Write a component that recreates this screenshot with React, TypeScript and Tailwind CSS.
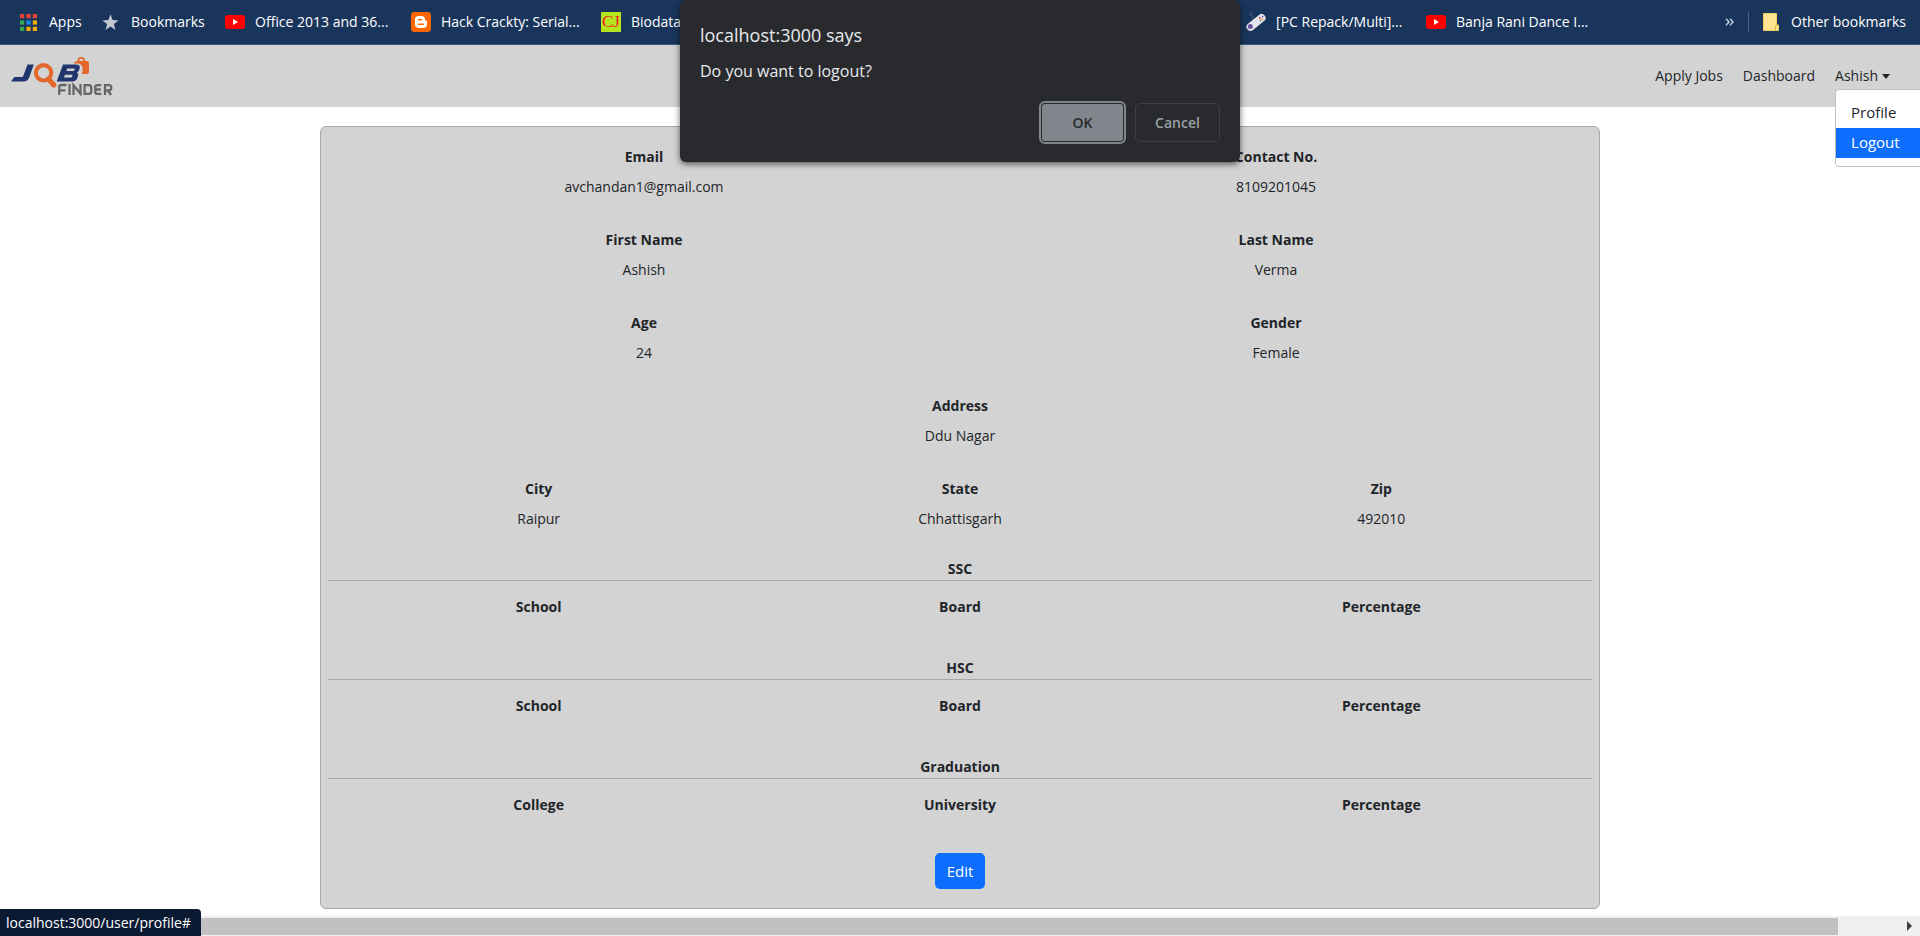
import type { ReactNode } from "react";

function YouTubeIcon() {
  return (
    <svg width="20" height="20" viewBox="0 0 20 20" aria-hidden="true">
      <rect x="0" y="3" width="20" height="14" rx="3" fill="#f00" />
      <path d="M8 7.1v5.8l5-2.9z" fill="#fff" />
    </svg>
  );
}

function AppsIcon() {
  const colors = ["#ea4335", "#ea4335", "#ea4335", "#34a853", "#1e88e5", "#fbad05", "#34a853", "#fbad05", "#fbad05"];
  return (
    <svg width="17" height="17" viewBox="0 0 17 17" aria-hidden="true">
      {colors.map((c, i) => (
        <rect key={i} x={(i % 3) * 6.4} y={Math.floor(i / 3) * 6.4} width="4.2" height="4.2" fill={c} />
      ))}
    </svg>
  );
}

function StarIcon() {
  return (
    <svg width="17" height="17" viewBox="0 0 17 17" aria-hidden="true">
      <path d="M8.5 0.6l2.1 5.5 5.9.3-4.6 3.7 1.6 5.8-5-3.3-5 3.3 1.6-5.8L.5 6.4l5.9-.3z" fill="#c3c8d0" />
    </svg>
  );
}

function BloggerIcon() {
  return (
    <svg width="20" height="20" viewBox="0 0 20 20" aria-hidden="true">
      <rect width="20" height="20" rx="3.4" fill="#f60" />
      <path d="M7.4 4h3.2c2 0 3.5 1.5 3.5 3.4 0 1 .3 1.2 1 1.2.6 0 .9.4.9.9v3c0 2-1.5 3.5-3.5 3.5h-5C5.5 16 4 14.5 4 12.5v-5C4 5.5 5.5 4 7.4 4z" fill="#fff" />
      <path d="M7.6 7.7h2.8M7.6 12.3h4.8" stroke="#f60" strokeWidth="1.6" strokeLinecap="round" />
    </svg>
  );
}

function ControllerIcon() {
  return (
    <svg width="20" height="20" viewBox="0 0 20 20" aria-hidden="true">
      <path d="M7 7C8 4 3 4 5 0" stroke="#4a5a78" strokeWidth="1.2" fill="none" />
      <path d="M4.5 14.8L15.5 6" stroke="#e6e4ec" strokeWidth="8" strokeLinecap="round" />
      <circle cx="4.3" cy="14.6" r="2.5" fill="#6a4fa3" />
      <circle cx="13.8" cy="6" r=".9" fill="#d33" />
      <circle cx="16.6" cy="4.6" r=".9" fill="#4a6fc4" />
      <circle cx="16.2" cy="7.4" r=".9" fill="#e0a030" />
      <circle cx="14.5" cy="8.6" r=".8" fill="#3a9a5a" />
    </svg>
  );
}

function FolderIcon() {
  return (
    <svg width="16" height="18" viewBox="0 0 16 18" aria-hidden="true">
      <path d="M.5.5h13V12h2v5.5H.5z" fill="#ffe591" stroke="#f2cf5c" />
      <path d="M12.5 17v-4.5H15" fill="none" stroke="#e3b93c" />
    </svg>
  );
}

function Logo() {
  return (
    <svg width="102" height="40" viewBox="0 0 102 40" role="img" aria-label="Job Finder">
      <path d="M16.5 8.5h6.3l-4.3 12.3c-1.1 3-2.9 4.7-6 4.7H0l3.4-4.6h6.9c1.2 0 1.7-.4 2.1-1.5z" fill="#21366f" />
      <circle cx="32.6" cy="16.8" r="7.7" fill="none" stroke="#e4672b" strokeWidth="4.1" />
      <path d="M37.5 23l5.3 6" stroke="#e4672b" strokeWidth="5.2" strokeLinecap="round" />
      <path d="M67.5 5.5V4c0-1.500 1-2.200 2.700-2.200s2.700.7 2.700 2.200v1.500" fill="none" stroke="#e4672b" strokeWidth="1.8" />
      <path d="M63 7.4c.5-1.600 1.500-2.400 3-2.400h9.700c1.500 0 2.300.8 2.300 2.300v8.400c0 1.500-.8 2.300-2.300 2.300h-5.200c1.200-2.200 1.300-3.800 1-6.200-.3-2.700-2-4.300-4.700-4.400z" fill="#e4672b" />
      <path fillRule="evenodd" d="M52 8.5h13.200c3 0 4.200 1.500 3.400 4l-.4 1.300c-.5 1.600-1.300 2.300-2.700 2.800 1.500.5 2 1.700 1.400 3.500l-.5 1.700c-.8 2.500-2.500 3.700-5.300 3.700H45.700zm4.300 4-1 2.600h6.700c.8 0 1.200-.3 1.400-1l.2-.5c.3-.7 0-1.100-.8-1.100zm-2.300 6.200-1 2.800h6.800c.8 0 1.200-.3 1.400-1l.2-.7c.3-.7 0-1.100-.8-1.100z" fill="#21366f" />
      <g fill="none" stroke="#666" strokeWidth="2.3">
        <path d="M48.300 39V31q0-2 2-2H55.500M48.300 34.300H54.500" />
        <path d="M58.500 28v11" />
        <path d="M62.500 39V29.300L69.500 37.700V28" />
        <path d="M73.600 29.100h4q2.700 0 2.700 2.700v3.400q0 2.700-2.700 2.700h-4z" />
        <path d="M90.300 29.100h-4.200q-1.800 0-1.800 1.800v5.200q0 1.800 1.800 1.800h4.200M84.300 33.500h5.500" />
        <path d="M94 39V29.100h4q2.200 0 2.200 2v1.200q0 2-2.200 2h-4M97 34.500l3 4.500" />
      </g>
    </svg>
  );
}

function Bookmark({ icon, children, className }: { icon: ReactNode; children: ReactNode; className: string }) {
  return (
    <a href="#" className={`flex shrink-0 items-center whitespace-nowrap ${className}`}>
      {icon}
      <span>{children}</span>
    </a>
  );
}

function Field({ label, value }: { label: string; value?: string }) {
  return (
    <div className="flex flex-1 flex-col items-center gap-1.5">
      <dt className="font-bold">{label}</dt>
      {value && <dd>{value}</dd>}
    </div>
  );
}

const rows: [string, string][][] = [
  [["Email", "avchandan1@gmail.com"], ["Contact No.", "8109201045"]],
  [["First Name", "Ashish"], ["Last Name", "Verma"]],
  [["Age", "24"], ["Gender", "Female"]],
  [["Address", "Ddu Nagar"]],
  [["City", "Raipur"], ["State", "Chhattisgarh"], ["Zip", "492010"]],
];

const sections = [
  { title: "SSC", fields: ["School", "Board", "Percentage"] },
  { title: "HSC", fields: ["School", "Board", "Percentage"] },
  { title: "Graduation", fields: ["College", "University", "Percentage"] },
];

export default function App() {
  return (
    <div className="relative flex min-h-screen flex-col overflow-hidden bg-white font-['Open_Sans',sans-serif] text-[14px] leading-6 text-[#212529]">
      <div className="flex h-[45px] items-center border-b border-[#3a5680] bg-[#1a355b] pr-3.5 pl-5 text-white">
        <Bookmark className="w-[82px] gap-3" icon={<AppsIcon />}>Apps</Bookmark>
        <Bookmark className="w-[123px] gap-3" icon={<StarIcon />}>Bookmarks</Bookmark>
        <Bookmark className="w-[186px] gap-2.5" icon={<YouTubeIcon />}>Office 2013 and 36...</Bookmark>
        <Bookmark className="w-[190px] gap-2.5" icon={<BloggerIcon />}>Hack Crackty: Serial...</Bookmark>
        <Bookmark
          className="mr-auto gap-2.5"
          icon={
            <span className="flex size-5 items-center justify-center bg-[#b5e61d] font-['Liberation_Serif',serif] text-[17px] text-[#ed1c24]">
              CJ
            </span>
          }
        >
          Biodata
        </Bookmark>
        <Bookmark className="w-[180px] gap-2.5" icon={<ControllerIcon />}>[PC Repack/Multi]...</Bookmark>
        <Bookmark className="w-[299px] gap-2.5" icon={<YouTubeIcon />}>Banja Rani Dance I...</Bookmark>
        <button type="button" aria-label="More bookmarks" className="text-[#c3cede]">
          <svg width="9" height="8" viewBox="0 0 9 8" fill="none" stroke="currentColor" strokeWidth="1.5">
            <path d="M1 .8L4 4 1 7.2M5 .8L8 4 5 7.2" />
          </svg>
        </button>
        <span className="mx-3.5 h-5 w-px bg-[#4a6285]" />
        <Bookmark className="gap-3" icon={<FolderIcon />}>Other bookmarks</Bookmark>
      </div>

      <header className="flex h-[62px] items-center justify-between bg-[#d3d3d3] pr-[30px] pl-[11px]">
        <a href="#"><Logo /></a>
        <nav className="flex items-center gap-5">
          <a href="#">Apply Jobs</a>
          <a href="#">Dashboard</a>
          <div className="relative">
            <button type="button" className="flex items-center gap-1" aria-expanded="true">
              Ashish
              <span className="border-x-[4px] border-t-[5px] border-x-transparent border-t-current" />
            </button>
            <ul className="absolute top-[25px] left-0 z-10 w-40 rounded border border-[#bfbfbf] bg-white py-2 text-[15px]">
              <li><a href="#" className="block px-[15px] pt-0.5 pb-1">Profile</a></li>
              <li><a href="#" className="block bg-[#0d6efd] px-[15px] pt-0.5 pb-1 text-white">Logout</a></li>
            </ul>
          </div>
        </nav>
      </header>

      <main className="mx-auto mt-[19px] mb-[7px] w-2/3 rounded-md border border-[#a9a9a9] bg-[#d3d3d3] px-[7px] pt-[18px] pb-[19px]">
        <div className="flex flex-col gap-[29px]">
          {rows.map((row) => (
            <dl key={row[0][0]} className="flex">
              {row.map(([label, value]) => (
                <Field key={label} label={label} value={value} />
              ))}
            </dl>
          ))}
        </div>
        <div className="mt-[26px] flex flex-col gap-[37px]">
          {sections.map(({ title, fields }) => (
            <section key={title}>
              <h2 className="h-6 border-b border-[#a6a6a6] text-center font-bold">{title}</h2>
              <dl className="mt-3.5 flex">
                {fields.map((f) => (
                  <Field key={f} label={f} />
                ))}
              </dl>
            </section>
          ))}
        </div>
        <div className="mt-9 flex justify-center">
          <button type="button" className="h-9 rounded-[5px] bg-[#0d6efd] px-3 text-[15px] text-white">Edit</button>
        </div>
      </main>

      <div className="mt-auto flex h-5 items-center justify-between bg-[#f0f0f0]" aria-hidden="true">
        <span className="h-[17px] w-[1838px] max-w-[96%] bg-[#c1c1c1]" />
        <span className="mr-2 border-y-[5px] border-l-[5px] border-y-transparent border-l-[#404040]" />
      </div>

      <div className="absolute bottom-0 left-0 flex h-[27px] items-center rounded-tr bg-[#0b1a33] pr-2.5 pl-1.5 text-white">
        localhost:3000/user/profile#
      </div>

      <div
        role="dialog"
        aria-labelledby="dialog-title"
        className="absolute top-0 left-1/2 z-20 flex h-[162px] w-[560px] -translate-x-1/2 flex-col rounded-md bg-[#292a2d] px-5 pt-[23px] pb-5 text-[#e8eaed] shadow-[0_2px_6px_rgba(0,0,0,0.6)]"
      >
        <h1 id="dialog-title" className="text-[18px]">localhost:3000 says</h1>
        <p className="mt-3 text-[16px]">Do you want to logout?</p>
        <div className="mt-auto flex items-center justify-end gap-3">
          <button type="button" className="h-[37px] w-[81px] rounded-[3px] bg-[#80868b] font-semibold text-[#292a2d] outline-2 outline-offset-1 outline-[#80868b]">
            OK
          </button>
          <button type="button" className="h-[39px] w-[85px] rounded-[5px] border border-[#3c4043] font-semibold text-[#9aa0a6]">
            Cancel
          </button>
        </div>
      </div>
    </div>
  );
}
